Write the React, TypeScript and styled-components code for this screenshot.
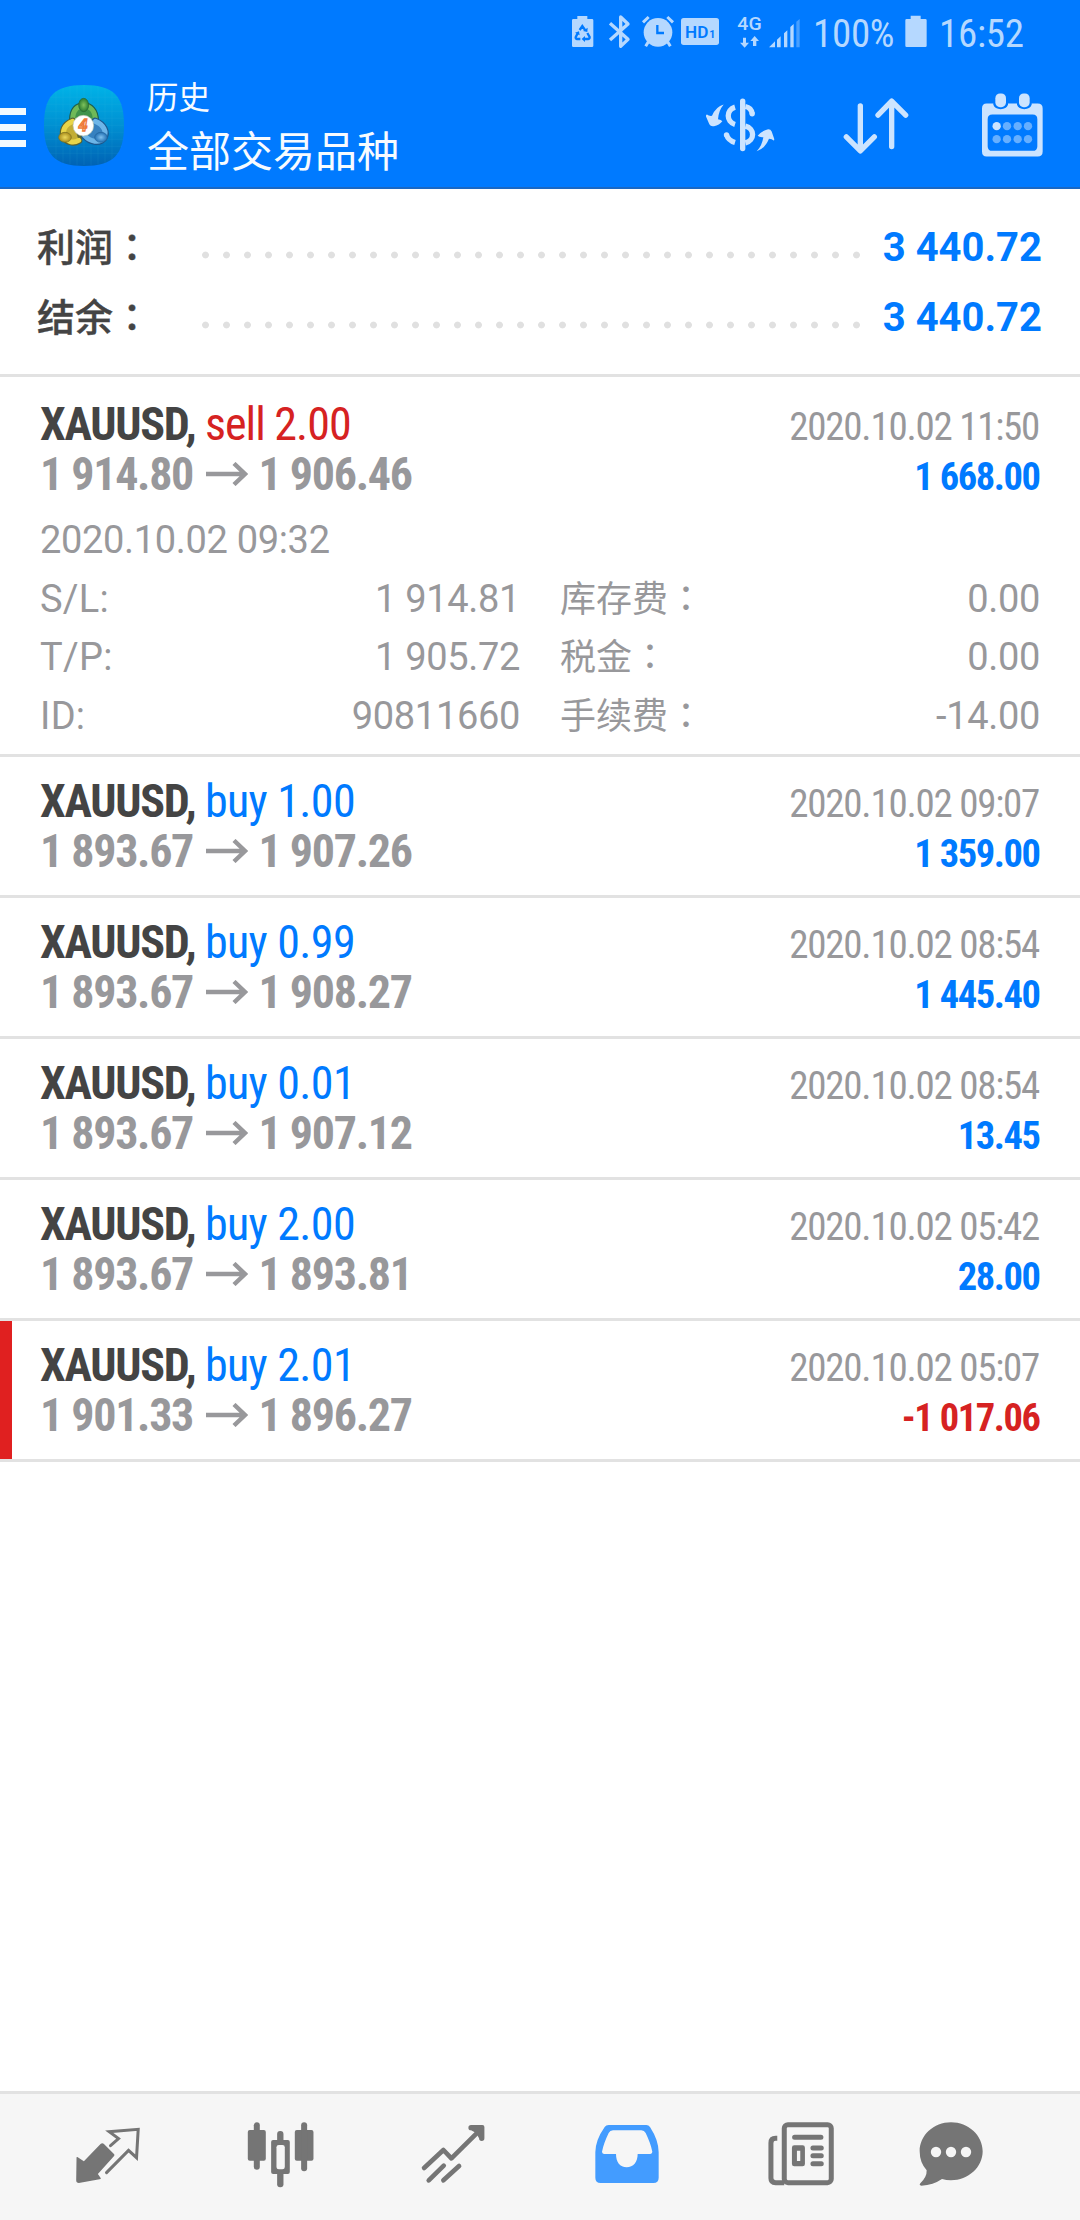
import React from "react";
import styled, { createGlobalStyle } from "styled-components";

const BLUE = "#007aff";
const GREY = "#98989b";
const SANS = `Roboto, "Noto Sans CJK SC", sans-serif`;
const CONDENSED = `"Roboto Condensed", Roboto, "Noto Sans CJK SC", sans-serif`;

const GlobalStyle = createGlobalStyle`
  * { box-sizing: border-box; }
  html, body { margin: 0; padding: 0; background: #fff; }
  svg { display: block; flex: none; }
`;

const Screen = styled.div`
  display: flex;
  flex-direction: column;
  width: 1080px;
  height: 2220px;
  overflow: hidden;
  background: #fff;
  font-family: ${SANS};
  color: #444;
`;

const Header = styled.header`
  height: 189px;
  background: ${BLUE};
  border-bottom: 2px solid #1a68c4;
`;

const StatusBar = styled.div`
  display: flex;
  align-items: center;
  height: 66px;
  padding-left: 570px;
  color: #b5d8ff;
`;

const StatusGlyph = styled.svg<{ $gap?: number }>`
  height: 40px;
  margin-left: ${(p) => p.$gap ?? 0}px;
  fill: #b5d8ff;
`;

const StatusText = styled.span<{ $gap: number; $width: number }>`
  width: ${(p) => p.$width}px;
  margin-left: ${(p) => p.$gap}px;
  padding-top: 1px;
  font: 400 39px/66px ${CONDENSED};
  font-stretch: 75%;
  letter-spacing: -0.3px;
  white-space: nowrap;
`;

const Toolbar = styled.div`
  display: flex;
  align-items: center;
  height: 121px;
  padding-right: 28px;
`;

const MenuButton = styled.div`
  display: flex;
  flex-direction: column;
  justify-content: space-between;
  width: 26px;
  height: 39px;
  margin-top: 2px;
`;

const MenuBar = styled.span`
  height: 7px;
  background: #f2faff;
`;

const Logo = styled.svg`
  width: 80px;
  height: 81px;
  margin-left: 18px;
  margin-bottom: 2px;
`;

const Titles = styled.div`
  flex: 1;
  margin-left: 23px;
  padding-top: 6px;
  color: #f7fbff;
`;

const Subtitle = styled.div`
  font-size: 31.5px;
  line-height: 46px;
`;

const Title = styled.div`
  font-size: 42px;
  line-height: 62px;
`;

const Actions = styled.div`
  display: flex;
  gap: 56px;
`;

const ActionIcon = styled.svg`
  width: 80px;
  height: 80px;
  fill: #cce4ff;
  stroke: none;
`;

const Summary = styled.section`
  padding: 24px 38px 21px 37px;
  height: 188px;
  border-bottom: 3px solid #e2e2e2;
`;

const SummaryRow = styled.div`
  display: flex;
  height: 70px;
  line-height: 70px;
  font-weight: 700;
`;

const SummaryLabel = styled.span`
  width: 158px;
  font-size: 38px;
  font-weight: 500;
  -webkit-text-stroke: 0.4px #444;
`;

const Colon = styled.span`
  font-family: "Noto Sans CJK TC", sans-serif;
  line-height: 1;
`;

const Leader = styled.span`
  width: 672px;
  height: 8px;
  margin-top: 38px;
  background: radial-gradient(circle at 10.5px 4px, #e0e0e0 3px, transparent 3.8px) 0 0 / 21px 8px repeat-x;
`;

const SummaryValue = styled.span`
  flex: 1;
  text-align: right;
  font-size: 40px;
  color: ${BLUE};
`;

const Deal = styled.article<{ $loss?: boolean; $expanded?: boolean }>`
  padding: ${(p) => (p.$expanded ? "22px 40px 9px" : "19px 40px")};
  border-bottom: 3px solid #e2e2e2;
  background: ${(p) => (p.$loss ? "linear-gradient(90deg, #e02020 12px, #fff 12px)" : "#fff")};
`;

const DealLine = styled.div`
  display: flex;
  align-items: baseline;
  justify-content: space-between;
  height: 50px;
  line-height: 50px;
  font-family: ${CONDENSED};
  font-stretch: 75%;
  white-space: nowrap;
`;

const Symbol = styled.span`
  font-size: 46px;
  font-weight: 700;
  letter-spacing: -1.3px;
  color: #444;
`;

const Side = styled.span<{ $sell?: boolean }>`
  font-weight: 450;
  letter-spacing: ${(p) => (p.$sell ? -0.95 : -0.6)}px;
  color: ${(p) => (p.$sell ? "#d62222" : BLUE)};
`;

const Prices = styled.span`
  display: flex;
  align-items: baseline;
  font-size: 46px;
  font-weight: 700;
  letter-spacing: -1.3px;
  color: ${GREY};
`;

const Arrow = styled.svg`
  width: 42px;
  height: 24px;
  margin: 0 10.5px 0 13px;
  align-self: center;
  fill: none;
  stroke: ${GREY};
  stroke-width: 4.4;
`;

const DealTime = styled.span`
  padding-right: 1px;
  font-size: 39px;
  letter-spacing: -1.25px;
  color: ${GREY};
`;

const Profit = styled.span<{ $loss?: boolean }>`
  padding-right: 0.5px;
  font-size: 38.5px;
  font-weight: 700;
  letter-spacing: -1.45px;
  color: ${(p) => (p.$loss ? "#d62222" : BLUE)};
`;

const Details = styled.div`
  display: grid;
  grid-template-columns: 480px 480px;
  column-gap: 40px;
  grid-auto-rows: 58.5px;
  margin-top: 12px;
  font-size: 38px;
  line-height: 58.5px;
  color: ${GREY};
`;

const Detail = styled.div<{ $wide?: boolean }>`
  display: flex;
  justify-content: space-between;
  grid-column: ${(p) => (p.$wide ? "1 / -1" : "auto")};
  letter-spacing: -0.33px;
`;

const Label = styled.span`
  letter-spacing: 0.3px;
`;

const CnLabel = styled.span`
  padding-top: 1px;
  font-size: 36px;
  letter-spacing: 0;
`;

const Blank = styled.div`
  flex: 1;
`;

const NavBar = styled.nav`
  display: grid;
  grid-template-columns: repeat(5, 173.4px) 126px;
  place-items: center;
  height: 129px;
  padding-left: 21px;
  border-top: 3px solid #e2e2e2;
  background: #f6f6f6;
`;

const NavIcon = styled.svg<{ $active?: boolean }>`
  width: 80px;
  height: 80px;
  color: ${(p) => (p.$active ? "#439cff" : "#757575")};
  fill: currentColor;
`;

type DealData = { side: "buy" | "sell"; volume: string; open: string; close: string; time: string; profit: string };

const deals: DealData[] = [
  { side: "sell", volume: "2.00", open: "1 914.80", close: "1 906.46", time: "2020.10.02 11:50", profit: "1 668.00" },
  { side: "buy", volume: "1.00", open: "1 893.67", close: "1 907.26", time: "2020.10.02 09:07", profit: "1 359.00" },
  { side: "buy", volume: "0.99", open: "1 893.67", close: "1 908.27", time: "2020.10.02 08:54", profit: "1 445.40" },
  { side: "buy", volume: "0.01", open: "1 893.67", close: "1 907.12", time: "2020.10.02 08:54", profit: "13.45" },
  { side: "buy", volume: "2.00", open: "1 893.67", close: "1 893.81", time: "2020.10.02 05:42", profit: "28.00" },
  { side: "buy", volume: "2.01", open: "1 901.33", close: "1 896.27", time: "2020.10.02 05:07", profit: "-1 017.06" },
];

const details: [string, string, string, string][] = [
  ["S/L:", "1 914.81", "库存费", "0.00"],
  ["T/P:", "1 905.72", "税金", "0.00"],
  ["ID:", "90811660", "手续费", "-14.00"],
];

function StatusIcons() {
  return (
    <>
      <StatusGlyph width="25" viewBox="30 39 75 120">
        <path d="M52 48h30v9h14q4 0 4 4v76q0 4-4 4H40q-4 0-4-4V61q0-4 4-4h12z" />
        <g fill="none" stroke={BLUE} strokeWidth="7">
          <path d="M59 90l8-12 9 13M53 100l-6 12q0 5 4 5h10M82 99l7 12q0 6-5 6H72" />
        </g>
        <path fill={BLUE} d="M69 93l13 3 1-13zM45 98l12-4 2 12zM75 108v18l-10-9z" />
      </StatusGlyph>
      <StatusGlyph $gap={11.7} width="25" viewBox="140 39 75 120">
        <path d="M149 70l54 48-22 21V51l22 21-54 48" fill="none" stroke="#b5d8ff" strokeWidth="10" strokeLinejoin="round" />
      </StatusGlyph>
      <StatusGlyph $gap={8.3} width="36" viewBox="240 39 108 120">
        <circle cx="294" cy="97" r="43" />
        <path d="M249 67l17-16M339 67l-17-16M266 124l-9 15M322 124l9 15" stroke="#b5d8ff" strokeWidth="9" />
        <path d="M292 75v24h20" fill="none" stroke={BLUE} strokeWidth="7" />
      </StatusGlyph>
      <StatusGlyph $gap={4} width="40" viewBox="360 39 120 120">
        <rect x="363" y="54" width="114" height="81" rx="8" />
        <text x="375" y="113" fill={BLUE} fontFamily="Roboto, sans-serif" fontWeight="600" fontSize="49" textLength="70" lengthAdjust="spacingAndGlyphs">HD</text>
        <text x="448" y="113" fill={BLUE} fontFamily="Roboto, sans-serif" fontWeight="700" fontSize="32">1</text>
      </StatusGlyph>
      <StatusGlyph $gap={16} width="28" viewBox="528 39 84 120">
        <text x="532" y="91" fontFamily="Roboto, sans-serif" fontWeight="500" fontSize="54" textLength="73" lengthAdjust="spacingAndGlyphs">4G</text>
        <path d="M549 113h9v15h9l-13 15-14-15h9zM579 138h10v-15h8l-13-15-13 15h8z" />
      </StatusGlyph>
      <StatusGlyph $gap={4} width="33" viewBox="624 39 99 120">
        <path d="M627 142l18-18v18zM651 119l11-10v33h-11zM672 100l10-9v51h-10zM691 81l10-9v70h-10z" />
        <path opacity=".4" d="M709 65l10-8v85h-10z" />
      </StatusGlyph>
    </>
  );
}

function AppLogo() {
  return (
    <Logo viewBox="133 75 240 243">
      <defs>
        <linearGradient id="tile" x1="0" y1="0" x2="0" y2="1">
          <stop offset="0" stopColor="#00b3e8" />
          <stop offset=".5" stopColor="#0090d2" />
          <stop offset="1" stopColor="#0062b4" />
        </linearGradient>
        <radialGradient id="green"><stop offset="0" stopColor="#7fc25c" /><stop offset="1" stopColor="#2c7d32" /></radialGradient>
        <radialGradient id="gold"><stop offset="0" stopColor="#ecd95c" /><stop offset="1" stopColor="#a98c1c" /></radialGradient>
        <radialGradient id="azure"><stop offset="0" stopColor="#7fc0ee" /><stop offset="1" stopColor="#2270b4" /></radialGradient>
      </defs>
      <path fill="url(#tile)" d="M253 75c88 0 120 32 120 121s-32 122-120 122-120-33-120-122S165 75 253 75z" />
      <path stroke="#4cc5ee" strokeOpacity=".14" strokeWidth="2" d="M169 95v206M190 84v226M211 78v236M232 76v240M253 76v240M274 76v240M295 78v236M316 84v226M337 95v206M150 112h206M139 133h228M135 154h236M134 175h238M134 196h238M134 217h238M135 238h236M139 259h228M150 280h206" />
      <g strokeLinecap="round" strokeLinejoin="round">
        <path fill="#2f7d4a" stroke="#1f5e4c" strokeWidth="22" d="M219 180c0-30 14-42 33-42s35 14 35 44z" />
        <path fill="#3f934c" stroke="#6fb958" strokeWidth="15" d="M219 180c0-30 14-42 33-42s35 14 35 44" />
        <path fill="#2a6ea8" stroke="#1d568c" strokeWidth="22" d="M287 184c25 10 36 32 25 50-12 16-40 12-58-8z" />
        <path fill="#3681c0" stroke="#6db5e8" strokeWidth="15" d="M287 184c25 10 36 32 25 50-12 16-40 12-58-8" />
        <path fill="#a8962c" stroke="#5c632f" strokeWidth="22" d="M219 184c-25 10-33 31-24 47 9 15 26 20 42 10z" />
        <path fill="#c2ad34" stroke="#e8d548" strokeWidth="15" d="M219 184c-25 10-33 31-24 47 9 15 26 20 42 10" />
      </g>
      <ellipse cx="252" cy="135" rx="15" ry="20" fill="url(#green)" stroke="#286336" strokeWidth="2" />
      <ellipse cx="196" cy="232" rx="19" ry="15" fill="url(#gold)" stroke="#776c20" strokeWidth="2" />
      <ellipse cx="304" cy="232" rx="19" ry="15" fill="url(#azure)" stroke="#24639a" strokeWidth="2" />
      <circle cx="251" cy="197" r="31" fill="#fff" stroke="#b9c6b0" strokeWidth="2" />
      <text x="250" y="214" textAnchor="middle" fontFamily="Roboto, sans-serif" fontStyle="italic" fontWeight="700" fontSize="48" fill="#fff3e4" stroke="#ee7a3a" strokeWidth="4">4</text>
    </Logo>
  );
}

function HeaderActions() {
  return (
    <Actions>
      <ActionIcon viewBox="60 49.5 240 240">
        <rect x="180" y="84" width="16" height="158" rx="8" />
        <g fill="none" stroke="#cce4ff" strokeWidth="16">
          <path d="M165 110C138 118 138 154 165 162M165 216c-14-4-22-12-26-24" />
          <path d="M196 108c11 2 19 10 21 22M196 167c29 7 29 43 0 50" />
        </g>
        <circle cx="216.500" cy="130" r="8" />
        <circle cx="139.500" cy="193" r="8" />
        <path d="M131 102Q108 108 96 136Q86 137 81 132Q77 132 78 138L88 161Q92 169 102 167Q118 164 127 152Q124 148 114 146Q116 120 131 102z" />
        <path d="M230 242Q254 236 267 205Q276 206 281 210Q284 209 282 203L275 183Q271 175 262 177Q244 182 233 196Q238 201 250 200Q246 226 230 242z" />
      </ActionIcon>
      <ActionIcon viewBox="468 49.5 240 240">
        <path d="M541 106v132M499 199l42 42 42-42M635 228V92M594 134l41-42 42 42" fill="none" stroke="#cce4ff" strokeWidth="16" strokeLinecap="round" strokeLinejoin="round" />
      </ActionIcon>
      <ActionIcon viewBox="876 49.5 240 240">
        <path fillRule="evenodd" d="M920 99h20v4q5 13 22 13t22-13v-4h27v4q5 13 22 13t22-13v-4h18q15 0 15 15v129q0 15-15 15H920q-14 0-14-15V114q0-15 14-15zM937 132q-14 0-14 14v81q0 14 14 14h121q14 0 14-14v-81q0-14-14-14z" />
        <rect x="946" y="69" width="32" height="41" rx="14" />
        <rect x="1017" y="69" width="32" height="41" rx="14" />
        <circle cx="950" cy="167" r="12.5" />
        {[981, 1013, 1044].map((x) => <circle key={x} cx={x} cy="167" r="12.5" opacity=".5" />)}
        {[950, 981, 1013, 1044].map((x) => <circle key={x} cx={x} cy="206" r="12.5" opacity=".5" />)}
      </ActionIcon>
    </Actions>
  );
}

function DealRow({ deal, children }: { deal: DealData; children?: React.ReactNode }) {
  const loss = deal.profit.startsWith("-");
  return (
    <Deal $loss={loss} $expanded={Boolean(children)}>
      <DealLine>
        <Symbol>XAUUSD, <Side $sell={deal.side === "sell"}>{deal.side} {deal.volume}</Side></Symbol>
        <DealTime>{deal.time}</DealTime>
      </DealLine>
      <DealLine>
        <Prices>
          {deal.open}
          <Arrow viewBox="0 0 42 24"><path d="M0 12h39M28 1.5L39 12 28 22.5" /></Arrow>
          {deal.close}
        </Prices>
        <Profit $loss={loss}>{deal.profit}</Profit>
      </DealLine>
      {children}
    </Deal>
  );
}

function BottomNav() {
  return (
    <NavBar>
      <NavIcon viewBox="83.4 111 240 240">
        <path d="M186 190q3 0 6 3l30 30q2 3-1 6l-48 53 9 13q0 3-4 3l-62 11q-8 0-8-8l1-69q2-3 6 1l16 11 50-52q3-2 5-2z" />
        <path d="M211 197l24-21-28-21 87-7-5 85-24-22-66 67" fill="none" stroke="currentColor" strokeWidth="9" strokeLinecap="round" />
      </NavIcon>
      <NavIcon viewBox="603.6 111 240 240">
        <rect x="624" y="150" width="54" height="92" rx="6" />
        <rect x="642" y="127" width="18" height="142" rx="9" />
        <rect x="765" y="150" width="56" height="92" rx="6" />
        <rect x="784" y="127" width="18" height="147" rx="9" />
        <rect x="712" y="153" width="19" height="50" rx="9" />
        <rect x="712" y="260" width="19" height="62" rx="9" />
        <rect x="694" y="180" width="56" height="102" rx="6" />
        <rect x="710" y="195" width="25" height="73" rx="7" fill="#f6f6f6" />
      </NavIcon>
      <NavIcon viewBox="73.8 111 240 240">
        <path d="M104 264l58-54 24 25 84-83M118 301l45-44M162 301l47-43" fill="none" stroke="currentColor" strokeWidth="14" strokeLinecap="round" strokeLinejoin="round" />
        <path d="M245 135h34q6 0 6 6v34q0 8-8 8t-8-8l-9-16-15-8q-8 0-8-8t8-8z" />
      </NavIcon>
      <NavIcon $active viewBox="594 111 240 240">
        <path fillRule="evenodd" d="M656 135h113q7 0 11 6 26 40 26 76v76q0 16-16 16H632q-16 0-16-16v-76q0-36 28-76 4-6 12-6zm13 16q-9 0-13 8-15 31-20 56 0 6 6 7h36c0 24 12 40 32 40s33-16 33-40h38q6-1 6-7-5-25-20-56-4-8-13-8z" />
      </NavIcon>
      <NavIcon viewBox="94.2 111 240 240">
        <g fill="none" stroke="currentColor" strokeWidth="15">
          <rect x="164" y="134" width="141" height="174" rx="11" />
          <path d="M143 175h-5q-14 0-14 14v106q0 13 14 13h26" />
          <path d="M195 172h79M250 204h25M250 227h25M250 251h25" strokeLinecap="round" />
        </g>
        <path fillRule="evenodd" d="M194 196h25q7 0 7 7v49q0 7-7 7h-25q-7 0-7-7v-49q0-7 7-7zm8 16v31h10v-31z" />
      </NavIcon>
      <NavIcon viewBox="543 111 240 240">
        <path d="M663 127c52 0 95 39 95 87s-43 87-95 87q-14 0-27-4-26 18-62 20-8-1-3-7 20-19 19-39-21-23-21-57c0-48 42-87 94-87z" />
        {[618, 663, 708].map((x) => <circle key={x} cx={x} cy="216" r="15.5" fill="#f6f6f6" />)}
      </NavIcon>
    </NavBar>
  );
}

export default function App() {
  return (
    <Screen>
      <GlobalStyle />
      <Header>
        <StatusBar>
          <StatusIcons />
          <StatusText $gap={12} $width={80}>100%</StatusText>
          <StatusGlyph $gap={12} width="22" viewBox="315 39 64 120">
            <path d="M331 47h30v10h14q4 0 4 4v76q0 4-4 4h-56q-4 0-4-4V61q0-4 4-4h12z" />
          </StatusGlyph>
          <StatusText $gap={12} $width={90}>16:52</StatusText>
        </StatusBar>
        <Toolbar>
          <MenuButton><MenuBar /><MenuBar /><MenuBar /></MenuButton>
          <AppLogo />
          <Titles>
            <Subtitle>历史</Subtitle>
            <Title>全部交易品种</Title>
          </Titles>
          <HeaderActions />
        </Toolbar>
      </Header>
      <Summary>
        {["利润", "结余"].map((label) => (
          <SummaryRow key={label}>
            <SummaryLabel>{label}<Colon>：</Colon></SummaryLabel>
            <Leader />
            <SummaryValue>3 440.72</SummaryValue>
          </SummaryRow>
        ))}
      </Summary>
      {deals.map((deal, i) => (
        <DealRow key={i} deal={deal}>
          {i === 0 && (
            <Details>
              <Detail $wide>2020.10.02 09:32</Detail>
              {details.map(([a, av, b, bv]) => (
                <React.Fragment key={a}>
                  <Detail><Label>{a}</Label><span>{av}</span></Detail>
                  <Detail><CnLabel>{b}<Colon>：</Colon></CnLabel><span>{bv}</span></Detail>
                </React.Fragment>
              ))}
            </Details>
          )}
        </DealRow>
      ))}
      <Blank />
      <BottomNav />
    </Screen>
  );
}
